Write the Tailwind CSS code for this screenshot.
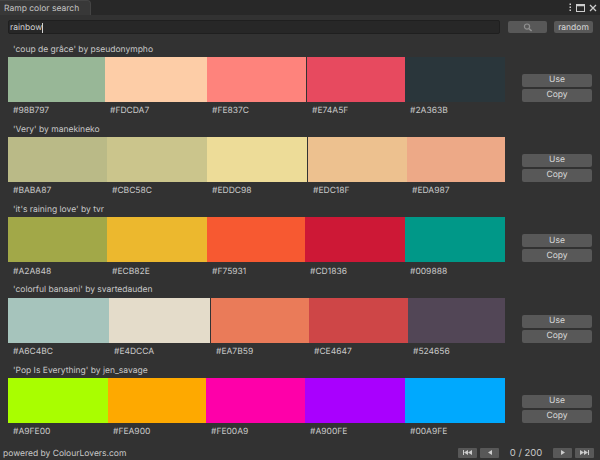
<!DOCTYPE html>
<html lang="en">
<head>
    <meta charset="UTF-8">
    <title>Ramp color search</title>
    <script src="https://cdn.jsdelivr.net/npm/@tailwindcss/browser@4"></script>
</head>
<body class="bg-[#323232] overflow-hidden">
    <div class="w-[600px] h-[460px] flex flex-col font-['Inter',sans-serif] text-[8.5px] leading-none text-[#c8c8c8] [text-rendering:geometricPrecision]">
        <!-- tab bar -->
        <div class="h-[15px] bg-[#282828] flex items-stretch justify-between">
            <div class="w-[91px] bg-[#383838] border-t border-r border-[#444] rounded-tr-sm pl-[4px] pt-[3px] flex items-center text-[#c4c4c4]">Ramp color search</div>
            <div class="flex items-center gap-[4px] pr-[3px]">
                <svg width="3" height="9" viewBox="0 0 3 9" fill="#ccc"><rect x="0.5" y="0.5" width="1.5" height="1.5"/><rect x="0.5" y="3.5" width="1.5" height="1.5"/><rect x="0.5" y="6.5" width="1.5" height="1.5"/></svg>
                <svg width="9" height="8" viewBox="0 0 9 8" fill="none" stroke="#ccc"><rect x="0.5" y="0.5" width="8" height="7"/><path d="M0 1.5h9" stroke-width="1.5"/></svg>
                <svg width="8" height="8" viewBox="0 0 8 8" fill="none" stroke="#ccc" stroke-width="1.3"><path d="M1 1l6 6M7 1l-6 6"/></svg>
            </div>
        </div>
        <!-- search row -->
        <div class="h-[26px] pl-[8px] pr-[7px] pb-[2px] flex items-center">
            <div class="w-[492px] h-[14px] bg-[#272727] border border-[#1f1f1f] rounded-[2px] flex items-center pl-[1px] pt-[2px] text-[#d2d2d2]">rainbow<span class="w-px h-[10px] bg-[#d2d2d2]"></span></div>
            <div class="w-[39px] h-[12px] ml-[8px] bg-[#585858] rounded-[2px] flex items-center justify-center">
                <svg width="10" height="9" viewBox="0 0 10 9" fill="none" stroke="#8f8f8f" stroke-width="1.2"><circle cx="4" cy="3.6" r="2.6"/><path d="M6 5.6l2.6 2.4" stroke-width="1.6"/></svg>
            </div>
            <div class="w-[39px] h-[12px] ml-[7px] pt-[2px] bg-[#585858] rounded-[2px] flex items-center justify-center text-[#d8d8d8]">random</div>
        </div>
        <!-- results -->
        <div class="h-[401px] grid grid-rows-5 pl-[8px]">
            <div class="flex flex-col">
                <div class="h-[16px] pl-[5px] pt-[2px] flex items-center">'coup de grâce' by pseudonympho</div>
                <div class="flex">
                    <div class="w-[497px] h-[45px] flex">
                        <div class="w-[97px] bg-[#98B797]"></div>
                        <div class="w-[102px] bg-[#FDCDA7]"></div>
                        <div class="w-[100px] bg-[#FE837C] border-r border-[#333]"></div>
                        <div class="w-[98px] bg-[#E74A5F]"></div>
                        <div class="w-[100px] bg-[#2A363B]"></div>
                    </div>
                    <div class="ml-[17px] self-end flex flex-col gap-[2px]">
                        <div class="w-[70px] h-[13px] bg-[#585858] rounded-[2px] flex items-center justify-center text-[#d8d8d8]">Use</div>
                        <div class="w-[70px] h-[13px] bg-[#585858] rounded-[2px] flex items-center justify-center text-[#d8d8d8]">Copy</div>
                    </div>
                </div>
                <div class="h-[16px] pt-[3px] flex items-center">
                    <div class="w-[97px] pl-[5px]">#98B797</div>
                    <div class="w-[102px] pl-[5px]">#FDCDA7</div>
                    <div class="w-[100px] pl-[5px]">#FE837C</div>
                    <div class="w-[98px] pl-[5px]">#E74A5F</div>
                    <div class="w-[100px] pl-[5px]">#2A363B</div>
                </div>
            </div>
            <div class="flex flex-col">
                <div class="h-[16px] pl-[5px] pt-[2px] flex items-center">'Very' by manekineko</div>
                <div class="flex">
                    <div class="w-[497px] h-[45px] flex">
                        <div class="w-[99px] bg-[#BABA87]"></div>
                        <div class="w-[100px] bg-[#CBC58C]"></div>
                        <div class="w-[101px] bg-[#EDDC98] border-r border-[#333]"></div>
                        <div class="w-[99px] bg-[#EDC18F]"></div>
                        <div class="w-[98px] bg-[#EDA987]"></div>
                    </div>
                    <div class="ml-[17px] self-end flex flex-col gap-[2px]">
                        <div class="w-[70px] h-[13px] bg-[#585858] rounded-[2px] flex items-center justify-center text-[#d8d8d8]">Use</div>
                        <div class="w-[70px] h-[13px] bg-[#585858] rounded-[2px] flex items-center justify-center text-[#d8d8d8]">Copy</div>
                    </div>
                </div>
                <div class="h-[16px] pt-[3px] flex items-center">
                    <div class="w-[99px] pl-[5px]">#BABA87</div>
                    <div class="w-[100px] pl-[5px]">#CBC58C</div>
                    <div class="w-[101px] pl-[5px]">#EDDC98</div>
                    <div class="w-[99px] pl-[5px]">#EDC18F</div>
                    <div class="w-[98px] pl-[5px]">#EDA987</div>
                </div>
            </div>
            <div class="flex flex-col">
                <div class="h-[16px] pl-[5px] pt-[2px] flex items-center">'it's raining love' by tvr</div>
                <div class="flex">
                    <div class="w-[497px] h-[45px] flex">
                        <div class="w-[99px] bg-[#A2A848]"></div>
                        <div class="w-[100px] bg-[#ECB82E]"></div>
                        <div class="w-[98px] bg-[#F75931]"></div>
                        <div class="w-[100px] bg-[#CD1836]"></div>
                        <div class="w-[100px] bg-[#009888]"></div>
                    </div>
                    <div class="ml-[17px] self-end flex flex-col gap-[2px]">
                        <div class="w-[70px] h-[13px] bg-[#585858] rounded-[2px] flex items-center justify-center text-[#d8d8d8]">Use</div>
                        <div class="w-[70px] h-[13px] bg-[#585858] rounded-[2px] flex items-center justify-center text-[#d8d8d8]">Copy</div>
                    </div>
                </div>
                <div class="h-[16px] pt-[3px] flex items-center">
                    <div class="w-[99px] pl-[5px]">#A2A848</div>
                    <div class="w-[100px] pl-[5px]">#ECB82E</div>
                    <div class="w-[98px] pl-[5px]">#F75931</div>
                    <div class="w-[100px] pl-[5px]">#CD1836</div>
                    <div class="w-[100px] pl-[5px]">#009888</div>
                </div>
            </div>
            <div class="flex flex-col">
                <div class="h-[16px] pl-[5px] pt-[2px] flex items-center">'colorful banaani' by svartedauden</div>
                <div class="flex">
                    <div class="w-[497px] h-[45px] flex">
                        <div class="w-[101px] bg-[#A6C4BC]"></div>
                        <div class="w-[102px] bg-[#E4DCCA] border-r border-[#333]"></div>
                        <div class="w-[98px] bg-[#EA7B59]"></div>
                        <div class="w-[99px] bg-[#CE4647]"></div>
                        <div class="w-[97px] bg-[#524656]"></div>
                    </div>
                    <div class="ml-[17px] self-end flex flex-col gap-[2px]">
                        <div class="w-[70px] h-[13px] bg-[#585858] rounded-[2px] flex items-center justify-center text-[#d8d8d8]">Use</div>
                        <div class="w-[70px] h-[13px] bg-[#585858] rounded-[2px] flex items-center justify-center text-[#d8d8d8]">Copy</div>
                    </div>
                </div>
                <div class="h-[16px] pt-[3px] flex items-center">
                    <div class="w-[101px] pl-[5px]">#A6C4BC</div>
                    <div class="w-[102px] pl-[5px]">#E4DCCA</div>
                    <div class="w-[98px] pl-[5px]">#EA7B59</div>
                    <div class="w-[99px] pl-[5px]">#CE4647</div>
                    <div class="w-[97px] pl-[5px]">#524656</div>
                </div>
            </div>
            <div class="flex flex-col">
                <div class="h-[16px] pl-[5px] pt-[2px] flex items-center">'Pop Is Everything' by jen_savage</div>
                <div class="flex">
                    <div class="w-[497px] h-[45px] flex">
                        <div class="w-[100px] bg-[#A9FE00]"></div>
                        <div class="w-[98px] bg-[#FEA900]"></div>
                        <div class="w-[99px] bg-[#FE00A9]"></div>
                        <div class="w-[100px] bg-[#A900FE]"></div>
                        <div class="w-[100px] bg-[#00A9FE]"></div>
                    </div>
                    <div class="ml-[17px] self-end flex flex-col gap-[2px]">
                        <div class="w-[70px] h-[13px] bg-[#585858] rounded-[2px] flex items-center justify-center text-[#d8d8d8]">Use</div>
                        <div class="w-[70px] h-[13px] bg-[#585858] rounded-[2px] flex items-center justify-center text-[#d8d8d8]">Copy</div>
                    </div>
                </div>
                <div class="h-[16px] pt-[3px] flex items-center">
                    <div class="w-[100px] pl-[5px]">#A9FE00</div>
                    <div class="w-[98px] pl-[5px]">#FEA900</div>
                    <div class="w-[99px] pl-[5px]">#FE00A9</div>
                    <div class="w-[100px] pl-[5px]">#A900FE</div>
                    <div class="w-[100px] pl-[5px]">#00A9FE</div>
                </div>
            </div>
        </div>
        <!-- footer -->
        <div class="flex-1 flex items-center justify-between pt-[3px] pl-[3px] pr-[6px]">
            <span class="pt-[3px]">powered by ColourLovers.com</span>
            <div class="flex items-center">
                <div class="w-[19px] h-[10px] bg-[#585858] rounded-[1px] flex items-center justify-center"><svg width="9" height="5" viewBox="0 0 9 5" fill="#ccc"><rect width="1" height="5"/><path d="M5 0v5L1 2.5zM9 0v5L5 2.5z"/></svg></div>
                <div class="w-[19px] h-[10px] ml-[3px] bg-[#585858] rounded-[1px] flex items-center justify-center"><svg width="4" height="5" viewBox="0 0 4 5" fill="#ccc"><path d="M4 0v5L0 2.5z"/></svg></div>
                <span class="w-[54px] pt-[2px] text-center text-[9.5px]">0 / 200</span>
                <div class="w-[19px] h-[10px] bg-[#585858] rounded-[1px] flex items-center justify-center"><svg width="4" height="5" viewBox="0 0 4 5" fill="#ccc"><path d="M0 0v5l4-2.5z"/></svg></div>
                <div class="w-[19px] h-[10px] ml-[3px] bg-[#585858] rounded-[1px] flex items-center justify-center"><svg width="9" height="5" viewBox="0 0 9 5" fill="#ccc"><rect x="8" width="1" height="5"/><path d="M0 0v5l4-2.5zM4 0v5l4-2.5z"/></svg></div>
            </div>
        </div>
    </div>
</body>
</html>
